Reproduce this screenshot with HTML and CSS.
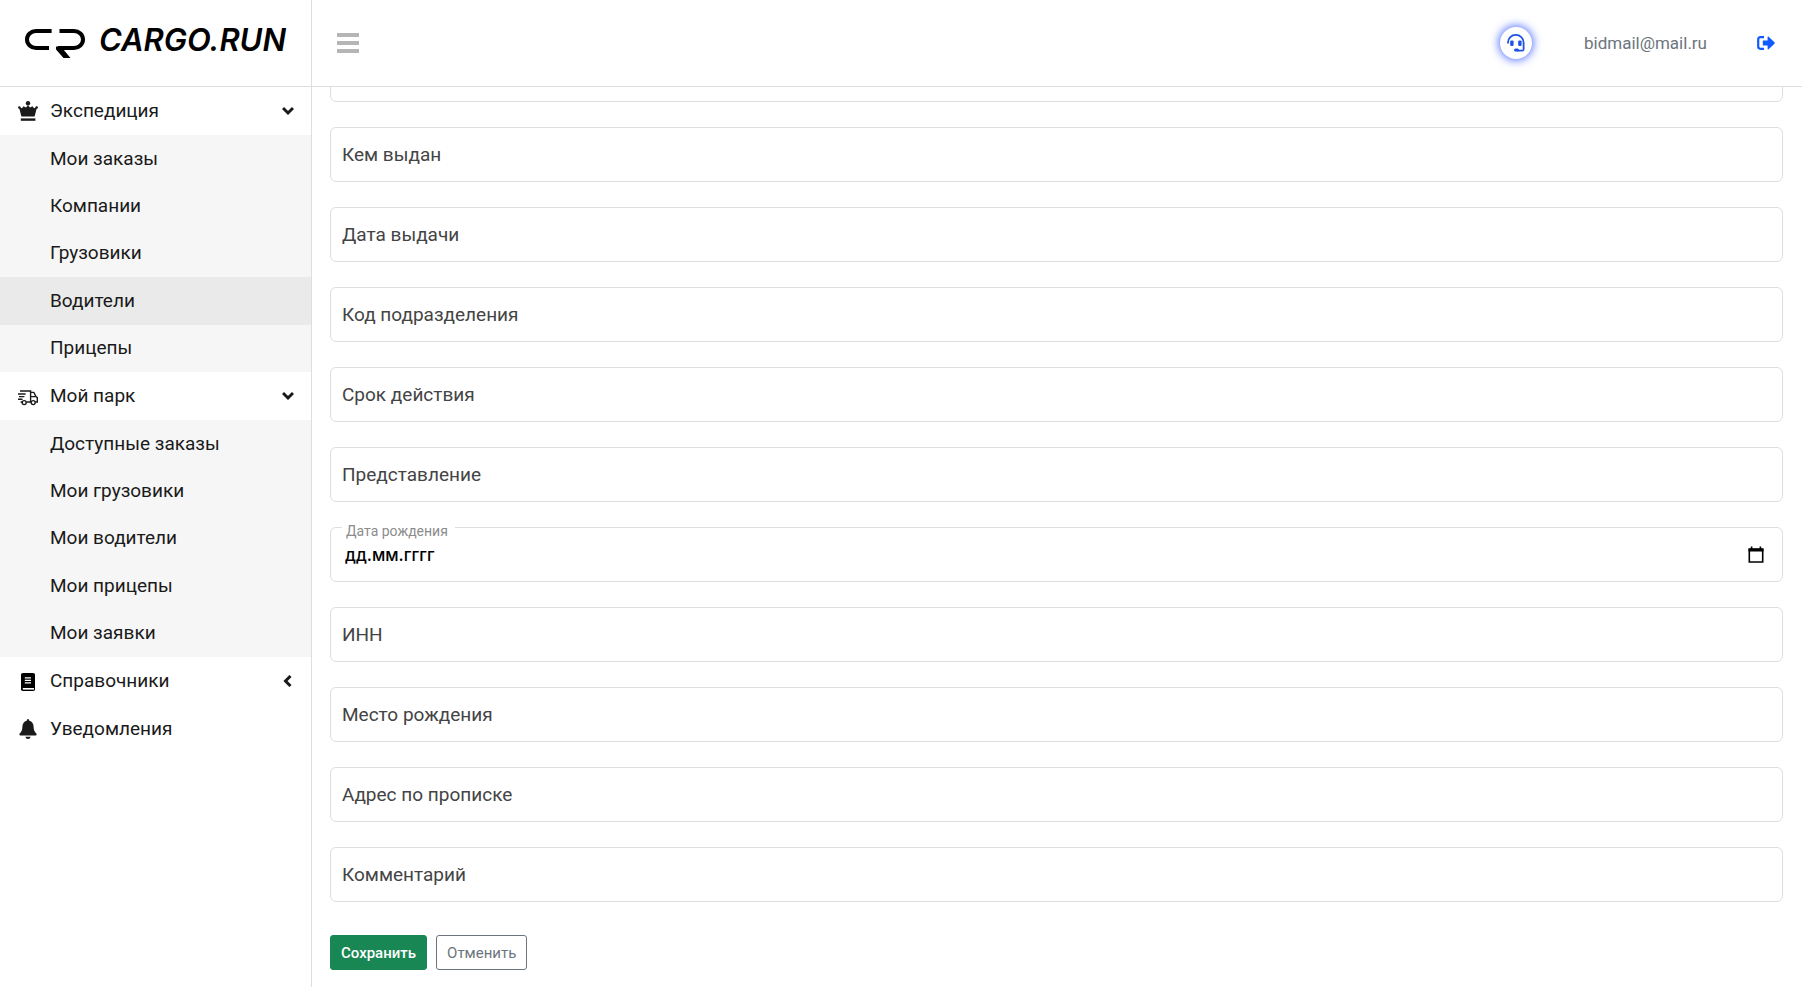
FILE: index.html
```html
<!DOCTYPE html>
<html lang="ru">
<head>
<meta charset="utf-8">
<title>CARGO.RUN</title>
<link rel="stylesheet" href="styles.css">
</head>
<body>
<div class="app">
  <aside class="sidebar">
    <a class="logo" href="#">
      <svg class="logo-mark" viewBox="0 0 60 30" fill="none" stroke="#000" stroke-width="4">
        <path d="M26.600 2H11C6 2 2 5.800 2 10.500S6 19 11 19H24"/>
        <path d="M34.500 2H49C54 2 58 5.800 58 10.500S54 19 49 19H33"/>
        <path d="M31 17.500H38V20L45.500 29H38.500L31 20.500Z" fill="#000" stroke="none"/>
      </svg>
      <span class="logo-text">CARGO.RUN</span>
    </a>
    <nav class="nav">
      <button class="nav-head" type="button">
        <svg class="nav-icon" viewBox="0 0 20 20" fill="#1a1a1a">
          <circle cx="10" cy="2.200" r="2.200"/><circle cx="1.300" cy="6.500" r="1.300"/><circle cx="18.700" cy="6.500" r="1.300"/>
          <path d="M1 6.300L4 7.200L5.500 5.300L8 6.500L10 4.300L12 6.500L14.500 5.300L16 7.200L19 6.300L16.600 15.600H3.400Z"/>
          <rect x="2.800" y="17.400" width="14.600" height="2.400"/>
        </svg>
        <span>Экспедиция</span>
        <svg class="chevron" viewBox="0 0 12 12"><path d="M1 3L6 8L11 3"/></svg>
      </button>
      <div class="nav-sub">
        <a href="#">Мои заказы</a>
        <a href="#">Компании</a>
        <a href="#">Грузовики</a>
        <a class="active" href="#">Водители</a>
        <a href="#">Прицепы</a>
      </div>
      <button class="nav-head" type="button">
        <svg class="nav-icon" viewBox="0 0 20 20" fill="none" stroke="#1a1a1a" stroke-width="1.400">
          <path d="M2 5H12.600V16H8.400M12.600 6.400H15.800L18 10.600L19.300 11.600V16H17.200M12.600 10.600H18M0 8H7.600M1 10.600H6.400M0 13.200H4.500M2.600 16H4.200"/>
          <circle cx="6.200" cy="16.600" r="2"/><circle cx="15.200" cy="16.600" r="2"/>
        </svg>
        <span>Мой парк</span>
        <svg class="chevron" viewBox="0 0 12 12"><path d="M1 3L6 8L11 3"/></svg>
      </button>
      <div class="nav-sub">
        <a href="#">Доступные заказы</a>
        <a href="#">Мои грузовики</a>
        <a href="#">Мои водители</a>
        <a href="#">Мои прицепы</a>
        <a href="#">Мои заявки</a>
      </div>
      <button class="nav-head" type="button">
        <svg class="nav-icon" viewBox="0 0 20 20">
          <path d="M4.800 2H15.200Q17 2 17 3.800V18.200Q17 20 15.200 20H4.800Q3 20 3 18.200V3.800Q3 2 4.800 2Z"/>
          <path d="M6.800 6.800H13M6.800 9.300H13M6.800 11.800H13" stroke="#fff" stroke-width="1.200"/>
          <path d="M4.800 17.800H16" stroke="#fff" stroke-width="1.600"/>
        </svg>
        <span>Справочники</span>
        <svg class="chevron" viewBox="0 0 12 12"><path d="M8.500 1L3.500 6L8.500 11"/></svg>
      </button>
      <a class="nav-head" href="#">
        <svg class="nav-icon" viewBox="0 0 20 20" fill="#1a1a1a">
          <path d="M10 0Q11.300 0 11.300 1.700Q15.600 3 15.600 7.800Q15.600 12.400 18.400 14.600Q19 16.500 17.800 16.500H2.200Q1 16.500 1.600 14.600Q4.400 12.400 4.400 7.800Q4.400 3 8.700 1.700Q8.700 0 10 0ZM7.400 17.800H12.600Q12.200 20 10 20Q7.800 20 7.400 17.800Z"/>
        </svg>
        <span>Уведомления</span>
      </a>
    </nav>
  </aside>
  <div class="page">
    <header class="topbar">
      <button class="burger" type="button" aria-label="Меню"><i></i><i></i><i></i></button>
      <div class="user">
        <button class="support" type="button" aria-label="Поддержка">
          <svg viewBox="0 0 18 18" fill="none" stroke="#1f52e6" stroke-width="1.800">
            <path d="M1 9.500V8.500A7.800 7.600 0 0 1 16.600 8.500V15.200Q16.600 16.600 15.200 16.600H10"/>
            <rect x="3.200" y="6.400" width="3.400" height="5.600" rx="1.200" fill="#1f52e6" stroke="none"/>
            <rect x="11.200" y="6.400" width="3.400" height="5.600" rx="1.200" fill="#1f52e6" stroke="none"/>
            <rect x="7" y="14.400" width="5" height="3.200" rx="1.500" fill="#1f52e6" stroke="none"/>
          </svg>
        </button>
        <span class="email">bidmail@mail.ru</span>
        <button class="logout" type="button" aria-label="Выход">
          <svg viewBox="0 0 18 14">
            <path d="M7 1.200H3.400Q1.200 1.200 1.200 3.400V10.600Q1.200 12.800 3.400 12.800H7" fill="none" stroke="#0f5bff" stroke-width="2.200"/>
            <path d="M5.800 4.600H10.600V0.800L11.400 0.400L17.700 6.500V7.500L11.400 13.600L10.600 13.200V9.400H5.800Z" fill="#0f5bff"/>
          </svg>
        </button>
      </div>
    </header>
    <main class="content">
      <form class="form">
        <div class="field"><input type="text"></div>
        <div class="field"><label for="issuer">Кем выдан</label><input id="issuer" type="text"></div>
        <div class="field"><label for="issued">Дата выдачи</label><input id="issued" type="text"></div>
        <div class="field"><label for="code">Код подразделения</label><input id="code" type="text"></div>
        <div class="field"><label for="expires">Срок действия</label><input id="expires" type="text"></div>
        <div class="field"><label for="view">Представление</label><input id="view" type="text"></div>
        <div class="field field-date">
          <label for="birth">Дата рождения</label><input id="birth" type="text" value="дд.мм.гггг">
          <button class="calendar" type="button" aria-label="Календарь">
            <svg viewBox="0 0 16 18"><path d="M1.300 3.500H14.700V16H1.300Z" fill="none" stroke="#000" stroke-width="1.600"/><path d="M0.500 2.300H15.500V5.600H0.500ZM2.800 0.500H4.400V3H2.800ZM11.600 0.500H13.200V3H11.600Z"/></svg>
          </button>
        </div>
        <div class="field"><label for="inn">ИНН</label><input id="inn" type="text"></div>
        <div class="field"><label for="place">Место рождения</label><input id="place" type="text"></div>
        <div class="field"><label for="address">Адрес по прописке</label><input id="address" type="text"></div>
        <div class="field"><label for="comment">Комментарий</label><input id="comment" type="text"></div>
        <div class="actions">
          <button class="btn btn-save" type="submit">Сохранить</button>
          <button class="btn btn-cancel" type="button">Отменить</button>
        </div>
      </form>
    </main>
  </div>
</div>
</body>
</html>
```
FILE: styles.css
```css
* { box-sizing: border-box; }
body { margin: 0; font: 19px/24px Roboto, "Noto Sans", sans-serif; color: #1a1a1a; background: #fff; }
a { color: inherit; text-decoration: none; }
button { font: inherit; color: inherit; background: none; border: 0; padding: 0; cursor: pointer; }
svg { display: block; }

.app { display: grid; grid-template-columns: 312px 1fr; height: 100vh; overflow: hidden; }

.sidebar { border-right: 1px solid #dedede; }
.logo { display: flex; align-items: flex-start; gap: 14px; height: 87px; padding: 29px 20px 0 25px; border-bottom: 1px solid #dedede; }
.logo-mark { width: 60px; height: 30px; flex: none; }
.logo-text { font: italic 600 31px/22px Inter, sans-serif; color: #000; }

.nav-head { display: flex; align-items: center; width: 100%; height: 48px; padding: 0 17px 0 18px; text-align: left; }
.nav-head span { flex: 1; }
.nav-icon { width: 20px; height: 20px; margin-right: 12px; }
.chevron { width: 12px; height: 12px; fill: none; stroke: #1a1a1a; stroke-width: 3; }
.nav-sub { display: grid; grid-auto-rows: 1fr; height: 237px; background: #f6f6f6; }
.nav-sub a { display: flex; align-items: center; padding-left: 50px; }
.nav-sub .active { background: #eaeaea; }

.page { display: flex; flex-direction: column; min-width: 0; min-height: 0; }
.topbar { display: flex; flex: none; align-items: center; justify-content: space-between; height: 87px; padding: 0 27px 0 25px; border-bottom: 1px solid #dedede; }
.burger { display: grid; gap: 4px; width: 22px; }
.burger i { height: 4px; background: #b5b5b5; }
.user { display: flex; align-items: center; }
.support { display: grid; place-items: center; width: 32px; height: 32px; margin-right: 52px; border-radius: 50%; background: #fff; box-shadow: 0 0 10px 1px #4d6cff; }
.support svg { width: 18px; height: 18px; }
.email { margin-right: 50px; font-size: 17px; color: #6c757d; }
.logout svg { width: 18px; height: 14px; }

.content { display: flex; flex: 1; flex-direction: column; justify-content: flex-end; min-height: 0; overflow: hidden; padding: 0 19px 17px 18px; }
.form { display: grid; flex: none; gap: 25px; }
.field { display: grid; grid-template-columns: 1fr auto; border: 1px solid #dedede; border-radius: 6px; height: 55px; }
.field label, .field input { grid-area: 1 / 1 / 2 / 3; align-self: center; }
.field label { justify-self: start; padding: 0 11px; color: #444; pointer-events: none; }
.field input { width: 100%; height: 100%; padding: 0 11px; border: 0; background: none; outline: 0; font: inherit; color: #000; }
.field-date label { align-self: start; justify-self: start; margin: -8px 0 0 11px; padding: 2px 7px 0 4px; font-size: 14px; line-height: 18px; color: #8c8c8c; background: #fff; }
.field-date input { padding: 0 14px; font: 500 17px/24px Inter, sans-serif; }
.calendar { grid-area: 1 / 2; align-self: center; margin-right: 18px; z-index: 1; }
.calendar svg { width: 16px; height: 18px; }

.actions { display: flex; gap: 9px; padding-top: 8px; }
.btn { height: 35px; padding: 0 10px; border: 1px solid #6c757d; border-radius: 3px; font-size: 15px; color: #6c757d; }
.btn-save { border-color: #198754; background: #198754; color: #fff; font-weight: 500; }
```
